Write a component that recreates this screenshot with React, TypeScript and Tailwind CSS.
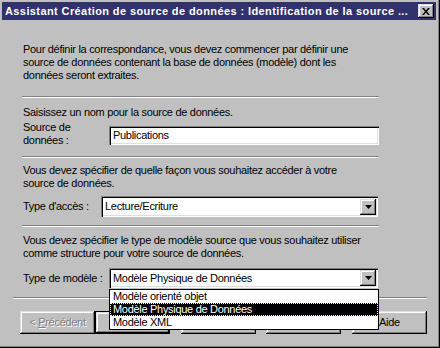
import React from 'react';

const raised =
  'shadow-[inset_-1px_-1px_0_#000,inset_1px_1px_0_#dfdfdf,inset_-2px_-2px_0_#808080,inset_2px_2px_0_#fff]';
const sunken =
  'shadow-[inset_1px_1px_0_#808080,inset_2px_2px_0_#000,inset_-1px_-1px_0_#fff,inset_-2px_-2px_0_#dfdfdf]';

function Separator({ className = '' }: { className?: string }) {
  return <div className={`h-[2px] border-t border-t-[#808080] border-b border-b-white ${className}`} />;
}

function Arrow() {
  return (
    <div className={`w-[16px] h-[16px] bg-[#c0c0c0] ${raised} flex items-center justify-center`}>
      <svg width="7" height="4" viewBox="0 0 7 4">
        <polygon points="0,0 7,0 3.5,4" fill="#000" />
      </svg>
    </div>
  );
}

function Combo({ value, className = '' }: { value: string; className?: string }) {
  return (
    <div className={`h-[20px] bg-white ${sunken} flex items-center pl-[4px] pr-[2px] ${className}`}>
      <span className="flex-1 leading-none">{value}</span>
      <Arrow />
    </div>
  );
}

function Button({ label, disabled, isDefault, className = '' }: { label?: React.ReactNode; disabled?: boolean; isDefault?: boolean; className?: string }) {
  const inner = (
    <div
      className={`w-full h-full bg-[#c0c0c0] ${raised} flex items-center justify-center ${
        disabled ? 'text-[#808080] [text-shadow:1px_1px_0_#fff]' : 'text-black'
      }`}
    >
      {label}
    </div>
  );
  return (
    <div className={`w-[75px] h-[23px] ${isDefault ? 'border border-black' : ''} ${className}`}>{inner}</div>
  );
}

export default function App() {
  return (
    <div
      className="relative w-[440px] h-[348px] bg-[#c0c0c0] text-[11px] tracking-[-0.3px] text-black whitespace-nowrap shadow-[inset_-1px_-1px_0_#000,inset_-2px_-2px_0_#808080]"
      style={{ fontFamily: '"Liberation Sans", Arial, sans-serif' }}
    >
      {/* barre de titre */}
      <div className="pt-[2px] pl-[2px] pr-[4px]">
        <div className="h-[18px] bg-[#31316b] flex items-center pl-[3px] pr-[2px]">
          <span className="flex-1 text-white font-bold text-[11px] tracking-[0.4px] whitespace-nowrap overflow-hidden">
            Assistant Création de source de données : Identification de la source ...
          </span>
          <div className={`w-[16px] h-[14px] bg-[#c0c0c0] ${raised} flex items-center justify-center`}>
            <svg width="8" height="7" viewBox="0 0 8 7">
              <path d="M0 0h2l2 2.5L6 0h2L5 3.5 8 7H6L4 4.5 2 7H0l3-3.5z" fill="#000" />
            </svg>
          </div>
        </div>
      </div>

      <div className="ml-[22px] w-[357px] leading-[13px]">
        <p className="mt-[23px] pl-px">
          Pour définir la correspondance, vous devez commencer par définir une
          <br />
          source de données contenant la base de données (modèle) dont les
          <br />
          données seront extraites.
        </p>

        <Separator className="mt-[14px]" />

        <p className="mt-[8px] pl-px">Saisissez un nom pour la source de données.</p>
        <div className="mt-[2px] flex items-start">
          <div className="w-[87px] pl-px">
            Source de
            <br />
            données :
          </div>
          <div className={`mt-[5px] flex-1 h-[19px] bg-white ${sunken} flex items-center pl-[4px]`}>
            Publications
          </div>
        </div>

        <Separator className="mt-[9px]" />

        <p className="mt-[6px] pl-px">
          Vous devez spécifier de quelle façon vous souhaitez accéder à votre
          <br />
          source de données.
        </p>
        <div className="mt-[6px] flex items-center">
          <div className="w-[79px] pl-px">Type d'accès :</div>
          <Combo value="Lecture/Ecriture" className="flex-1 mr-[1px] h-[21px]" />
        </div>

        <Separator className="mt-[8px]" />

        <p className="mt-[7px] pl-px">
          Vous devez spécifier le type de modèle source que vous souhaitez utiliser
          <br />
          comme structure pour votre source de données.
        </p>
        <div className="mt-[8px] flex items-center">
          <div className="w-[87px] pl-px">Type de modèle :</div>
          <Combo value="Modèle Physique de Données" className="flex-1 mr-[1px]" />
        </div>
      </div>

      <Separator className="mt-[9px] ml-[13px] w-[414px]" />

      {/* boutons (libellés masqués par la liste ouverte) */}
      <div className="mt-[12px] pl-[20px] flex">
        <Button
          disabled
          label={
            <span>
              &lt; <u>P</u>récédent
            </span>
          }
        />
        <Button isDefault />
        <Button className="ml-[11px]" />
        <Button className="ml-[10px]" />
        <Button label="Aide" className="ml-[11px]" />
      </div>

      {/* liste déroulante ouverte */}
      <div className="absolute left-[109px] top-[289px] w-[270px] bg-white border border-black leading-[13px]">
        <div className="h-[13px] pl-[3px]">Modèle orienté objet</div>
        <div className="h-[13px] pl-[2px] bg-black text-white border border-dotted border-[#ffff80] leading-[11px]">
          Modèle Physique de Données
        </div>
        <div className="h-[13px] pl-[3px]">Modèle XML</div>
      </div>
    </div>
  );
}
